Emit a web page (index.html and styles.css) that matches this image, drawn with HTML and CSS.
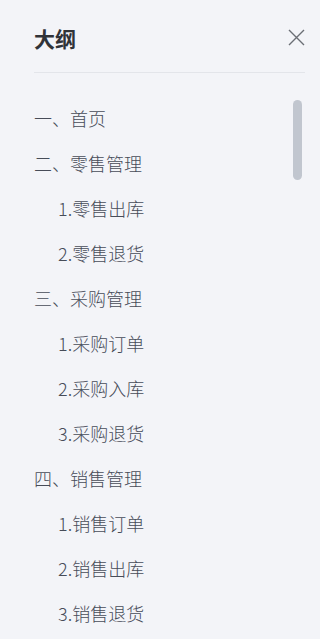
FILE: index.html
```html
<!DOCTYPE html>
<html lang="zh">
<head>
<meta charset="utf-8">
<title>大纲</title>
<link rel="stylesheet" href="styles.css">
</head>
<body>
<aside class="outline">
  <header class="outline-header">
    <h2 class="outline-title">大纲</h2>
    <button class="close-btn" aria-label="关闭">
      <svg width="17" height="17" viewBox="0 0 17 17"><path d="M1 1 L16 16 M16 1 L1 16" stroke="#6b6e75" stroke-width="1.4" fill="none"/></svg>
    </button>
  </header>
  <div class="outline-body">
    <ul class="outline-list">
      <li class="item">一、首页</li>
      <li class="item">二、零售管理</li>
      <li class="item sub">1.零售出库</li>
      <li class="item sub">2.零售退货</li>
      <li class="item">三、采购管理</li>
      <li class="item sub">1.采购订单</li>
      <li class="item sub">2.采购入库</li>
      <li class="item sub">3.采购退货</li>
      <li class="item">四、销售管理</li>
      <li class="item sub">1.销售订单</li>
      <li class="item sub">2.销售出库</li>
      <li class="item sub">3.销售退货</li>
    </ul>
    <div class="scroll-thumb"></div>
  </div>
</aside>
</body>
</html>
```
FILE: styles.css
```css
html, body {
  margin: 0;
  padding: 0;
  height: 100%;
  background: #f3f4f8;
  overflow: hidden;
}
.outline {
  font-family: "Noto Sans CJK SC", "Noto Sans", sans-serif;
  padding: 0 15px 0 34px;
  height: 100%;
  box-sizing: border-box;
  overflow: hidden;
}
.outline-header {
  display: flex;
  align-items: center;
  justify-content: space-between;
  height: 48px;
  padding-top: 14px;
  padding-bottom: 10px;
  border-bottom: 1px solid #e3e5ea;
}
.outline-title {
  margin: 0;
  font-size: 21px;
  font-weight: 700;
  color: #303338;
  line-height: 1;
}
.close-btn {
  border: 0;
  background: none;
  padding: 0;
  width: 17px;
  height: 17px;
  display: flex;
  margin-top: -2px;
}
.outline-body {
  position: relative;
  padding-top: 23px;
}
.outline-list {
  list-style: none;
  margin: 0;
  padding: 0;
}
.item {
  height: 45px;
  line-height: 45px;
  font-size: 18px;
  font-weight: 300;
  color: #474c58;
  white-space: nowrap;
}
.item.sub {
  padding-left: 24px;
}
.scroll-thumb {
  position: absolute;
  right: 3px;
  top: 27px;
  width: 9px;
  height: 80px;
  border-radius: 5px;
  background: #c1c6cf;
}
```
